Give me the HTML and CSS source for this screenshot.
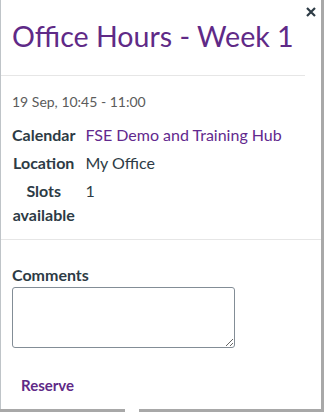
FILE: index.html
```html
<!DOCTYPE html>
<html>
    <head>
        <title>Office Hours - Week 1</title>
        <link rel="stylesheet" href="styles.css">
    </head>
    <body>
        <div class="popover">
            <button class="close" title="Close">
                <svg width="10" height="10" viewBox="0 0 10 10"><path d="M1 1L9 9M9 1L1 9" stroke="#2d3b45" stroke-width="2.2" fill="none"/></svg>
            </button>
            <div class="header">
                <h2 class="title">Office Hours - Week 1</h2>
            </div>
            <div class="details">
                <div class="date">19 Sep, 10:45 - 11:00</div>
                <table class="info">
                    <tr>
                        <th>Calendar</th>
                        <td><a href="#" class="link">FSE Demo and Training Hub</a></td>
                    </tr>
                    <tr>
                        <th>Location</th>
                        <td>My Office</td>
                    </tr>
                    <tr>
                        <th>Slots<br>available</th>
                        <td>1</td>
                    </tr>
                </table>
            </div>
            <div class="comments">
                <label class="comments-label" for="comments">Comments</label>
                <textarea id="comments" class="comments-box"></textarea>
            </div>
            <div class="actions">
                <button class="reserve">Reserve</button>
            </div>
            <div class="notch"></div>
        </div>
    </body>
</html>
```

FILE: styles.css
```css
html, body{
    margin: 0;
    height: 100%;
}

body{
    background: #a8a8a8;
    font-family: Lato, "Open Sans", sans-serif;
    color: #2d3b45;
}

.popover{
    position: relative;
    width: 320px;
    height: 409px;
    background: #fff;
    border-left: 1px solid #bfc4c8;
    box-sizing: content-box;
}

.close{
    position: absolute;
    top: 7px;
    right: 5px;
    border: none;
    background: none;
    padding: 0;
    line-height: 0;
}

.header{
    padding: 19px 16px 0 0;
}

.title{
    margin: 0;
    padding: 0 0 22px 11px;
    font-size: 28.6px;
    line-height: 34px;
    font-weight: normal;
    color: #5f2a87;
    border-bottom: 1px solid #e6e6e6;
}

.details{
    padding: 16px 11px 10px 11px;
    border-bottom: 1px solid #e6e6e6;
}

.date{
    font-size: 14px;
    line-height: 20px;
    color: #5b5b5b;
    margin-bottom: 9px;
}

.info{
    border-spacing: 0;
    font-size: 16px;
    line-height: 24px;
}

.info th{
    vertical-align: top;
    padding: 2px 10px 2px 0;
    font-weight: bold;
}

.info td{
    vertical-align: top;
    padding: 2px 0;
}

.link{
    color: #62298e;
    text-decoration: none;
}

.comments{
    padding: 23px 11px 0 11px;
    display: flex;
    flex-direction: column;
    align-items: flex-start;
}

.comments-label{
    font-size: 16px;
    line-height: 24px;
    font-weight: bold;
}

.comments-box{
    width: 223px;
    height: 61px;
    box-sizing: border-box;
    border: 1px solid #838d96;
    border-radius: 3px;
    resize: both;
}

.actions{
    padding: 24px 11px 0 11px;
}

.reserve{
    border: none;
    background: none;
    padding: 4px 9px;
    font-family: Lato, sans-serif;
    font-size: 15px;
    font-weight: bold;
    color: #5f2a87;
}

.notch{
    position: absolute;
    left: 124px;
    bottom: -3px;
    width: 14px;
    height: 3px;
    background: #fff;
}
```
